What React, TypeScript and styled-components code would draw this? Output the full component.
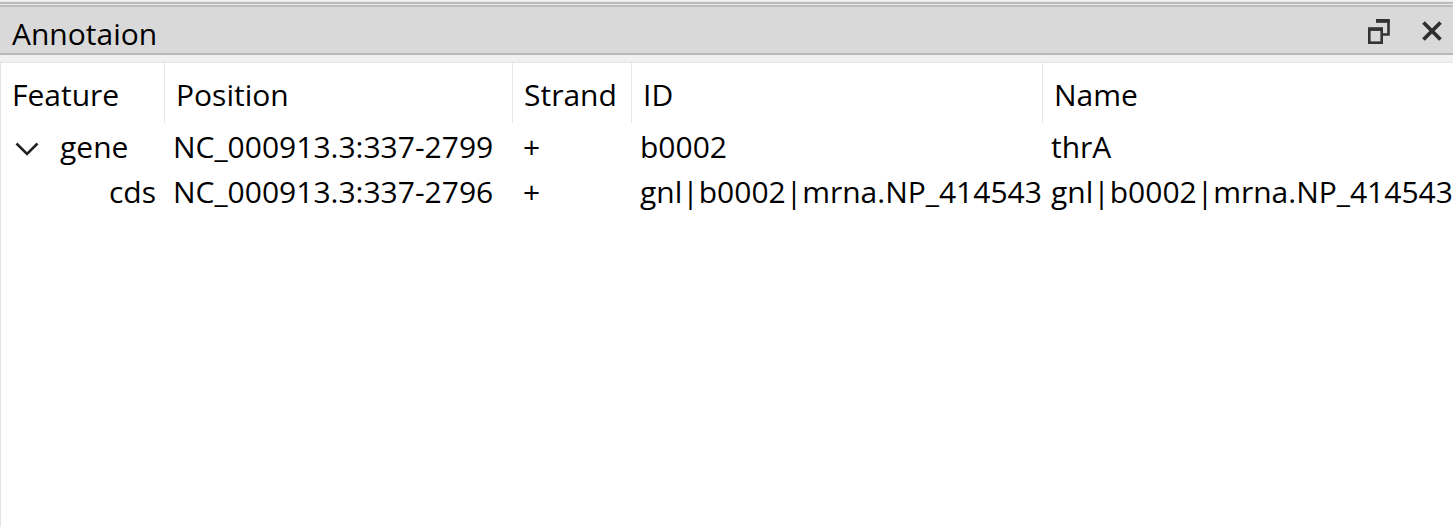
import React from "react";
import styled, { createGlobalStyle } from "styled-components";

const Global = createGlobalStyle`
  html, body { margin: 0; padding: 0; background: #ffffff; }
  body { font-family: "Open Sans", "Noto Sans", "Liberation Sans", sans-serif; color: #000; }
  #root { height: 527px; }
`;

const Panel = styled.div`
  height: 527px;
  display: flex;
  flex-direction: column;
  background: #ffffff;
  overflow: hidden;
`;

const TopEdge = styled.div`
  height: 7px;
  box-sizing: border-box;
  background: #e8e8e8;
  border-top: 1px solid #f3f3f3;
  display: flex;
  flex-direction: column;
  justify-content: space-between;
  padding: 1px 0 0;
`;

const EdgeLine = styled.div`
  height: 2px;
  background: #bcbcbc;
`;

const TitleBar = styled.div`
  height: 46px;
  display: flex;
  align-items: center;
  background: #d9d9d9;
  padding: 0 10px 0 12px;
`;

const Title = styled.div`
  flex: 1;
  font-size: 30px;
  line-height: 40px;
  padding-top: 8px;
`;

const IconButton = styled.button<{ $gap?: number; $drop?: number }>`
  border: none;
  background: transparent;
  padding: 0;
  margin-left: ${(p) => p.$gap ?? 0}px;
  margin-top: ${(p) => p.$drop ?? 0}px;
  display: flex;
  align-items: center;
  justify-content: center;
`;

const TitleRule = styled.div`
  height: 2px;
  background: #b8b8b8;
`;

const Gutter = styled.div`
  height: 8px;
  box-sizing: border-box;
  background: #f0f0f0;
  border-bottom: 1px solid #e4e4e4;
`;

const TreeArea = styled.div`
  flex: 1;
  border-left: 1px solid #e3e3e3;
  font-size: 30px;
`;

const Grid = styled.div`
  display: grid;
  grid-template-columns: 164px 348px 119px 411px 1fr;
`;

const HeadCell = styled.div<{ $last?: boolean }>`
  height: 60px;
  line-height: 40px;
  padding: 12px 0 0 11px;
  box-sizing: border-box;
  border-right: ${(p) => (p.$last ? "none" : "1px solid #e6e6e6")};
  white-space: nowrap;
`;

const Cell = styled.div<{ $indent?: number }>`
  height: 45px;
  line-height: 45px;
  padding-left: ${(p) => p.$indent ?? 8}px;
  padding-top: 2px;
  box-sizing: border-box;
  white-space: nowrap;
  display: flex;
  align-items: center;
`;

const Chevron = styled.svg`
  width: 24px;
  height: 14px;
  margin-left: 14px;
  margin-right: 21px;
  margin-top: 5px;
  flex: none;
`;

const FloatIcon = () => (
  <svg width="24" height="26" viewBox="0 0 24 26">
    <path d="M9 2.5 H21.5 V15.5 H15.5" fill="none" stroke="#333" strokeWidth="2.6" />
    <path d="M9 1.5 H22.8" stroke="#333" strokeWidth="3.6" />
    <rect x="2.3" y="10.3" width="12.4" height="13.4" fill="#d9d9d9" stroke="#333" strokeWidth="2.6" />
    <path d="M1 10 H16" stroke="#333" strokeWidth="3.6" />
  </svg>
);

const CloseIcon = () => (
  <svg width="22" height="20" viewBox="0 0 22 20">
    <path d="M2.5 1.5 L19.5 18.5 M19.5 1.5 L2.5 18.5" stroke="#2e2e2e" strokeWidth="3.8" strokeLinecap="butt" />
  </svg>
);

type Row = {
  feature: string;
  position: string;
  strand: string;
  id: string;
  name: string;
  expandable?: boolean;
  indent?: number;
};

const rows: Row[] = [
  { feature: "gene", position: "NC_000913.3:337-2799", strand: "+", id: "b0002", name: "thrA", expandable: true },
  {
    feature: "cds",
    position: "NC_000913.3:337-2796",
    strand: "+",
    id: "gnl|b0002|mrna.NP_414543",
    name: "gnl|b0002|mrna.NP_414543",
    indent: 108,
  },
];

const headers = ["Feature", "Position", "Strand", "ID", "Name"];

export default function App() {
  return (
    <>
      <Global />
      <Panel>
        <TopEdge>
          <EdgeLine />
          <EdgeLine />
        </TopEdge>
        <TitleBar>
          <Title>Annotaion</Title>
          <IconButton $drop={3}>
            <FloatIcon />
          </IconButton>
          <IconButton $gap={30} $drop={2}>
            <CloseIcon />
          </IconButton>
        </TitleBar>
        <TitleRule />
        <Gutter />
        <TreeArea>
          <Grid>
            {headers.map((h, i) => (
              <HeadCell key={h} $last={i === headers.length - 1}>
                {h}
              </HeadCell>
            ))}
            {rows.map((r) => (
              <React.Fragment key={r.feature}>
                <Cell $indent={r.expandable ? 0 : r.indent}>
                  {r.expandable && (
                    <Chevron viewBox="0 0 24 14">
                      <path d="M1.5 1.5 L12 12 L22.5 1.5" fill="none" stroke="#222" strokeWidth="2.6" />
                    </Chevron>
                  )}
                  {r.feature}
                </Cell>
                <Cell>{r.position}</Cell>
                <Cell $indent={10}>{r.strand}</Cell>
                <Cell>{r.id}</Cell>
                <Cell>{r.name}</Cell>
              </React.Fragment>
            ))}
          </Grid>
        </TreeArea>
      </Panel>
    </>
  );
}
